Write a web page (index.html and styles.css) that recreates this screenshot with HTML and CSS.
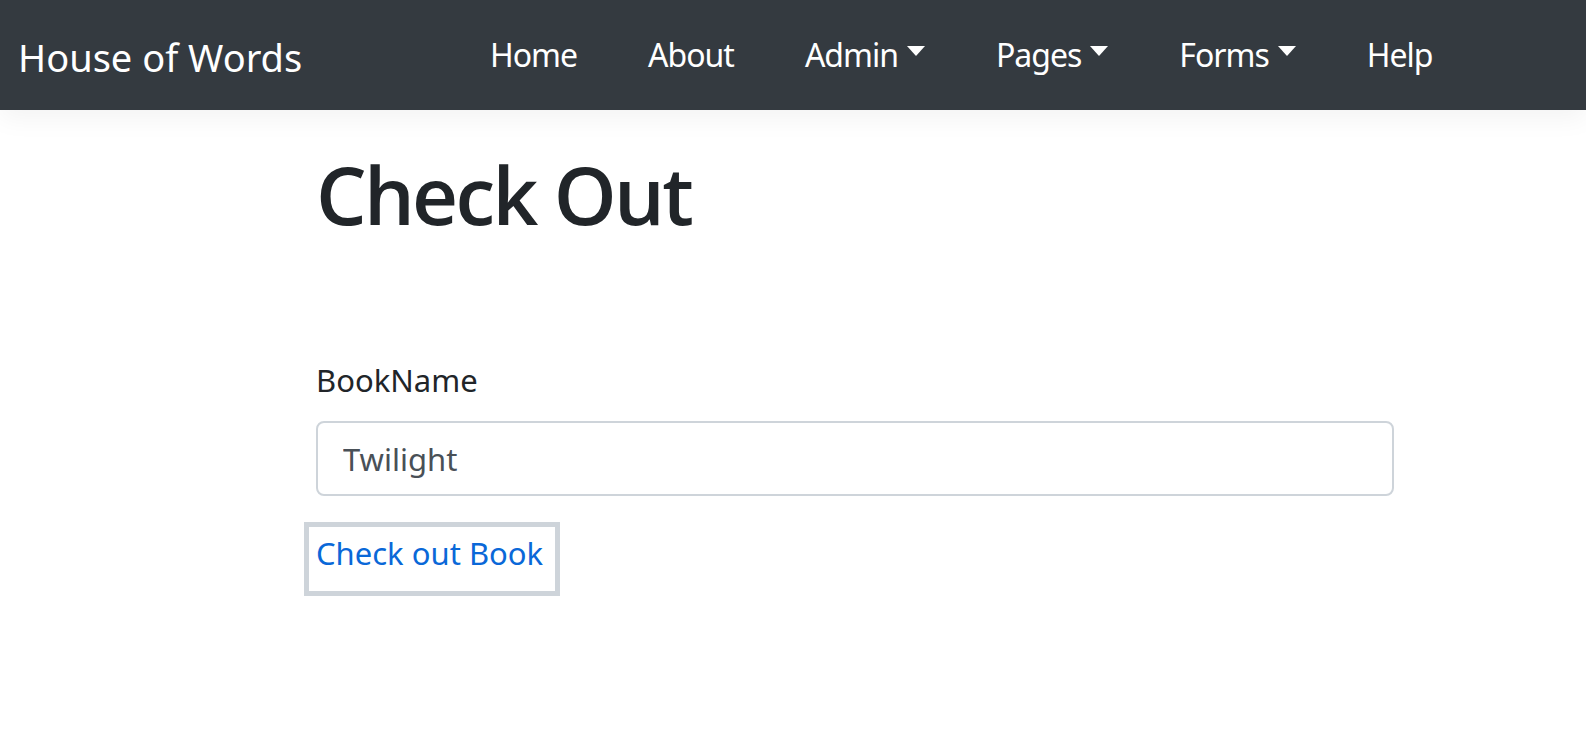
FILE: index.html
```html
<!DOCTYPE html>
<html lang="en">
<head>
<meta charset="utf-8">
<title>Check Out - House of Words</title>
<link rel="stylesheet" href="styles.css">
</head>
<body>
<header class="navbar">
  <a class="brand" href="#">House of Words</a>
  <ul class="nav">
    <li><a class="nav-link" href="#">Home</a></li>
    <li><a class="nav-link" href="#">About</a></li>
    <li><a class="nav-link dropdown" href="#">Admin</a></li>
    <li><a class="nav-link dropdown" href="#">Pages</a></li>
    <li><a class="nav-link dropdown" href="#">Forms</a></li>
    <li><a class="nav-link" href="#">Help</a></li>
  </ul>
</header>
<main class="content">
  <h1 class="title">Check Out</h1>
  <form class="form">
    <label class="label" for="book">BookName</label>
    <input class="input" id="book" type="text" value="Twilight">
    <button class="btn" type="button">Check out Book</button>
  </form>
</main>
</body>
</html>
```
FILE: styles.css
```css
* { box-sizing: border-box; }
html, body { margin: 0; padding: 0; }
body {
  font-family: "Noto Sans", "Open Sans", sans-serif;
  color: #212529;
  background: #fff;
}
.navbar {
  height: 110px;
  background: #343a40;
  display: flex;
  align-items: center;
  box-shadow: 0 8px 25px rgba(0, 0, 0, 0.05);
  position: relative;
}
.brand {
  width: 490px;
  padding-left: 18px;
  color: #fff;
  font-size: 38px;
  text-decoration: none;
  line-height: 1;
  margin-top: 3px;
}
.nav {
  list-style: none;
  margin: 0;
  padding: 0;
  display: flex;
  gap: 71px;
}
.nav-link {
  color: #fff;
  text-decoration: none;
  font-size: 32px;
  letter-spacing: -1px;
  line-height: 1;
  display: inline-flex;
  align-items: center;
}
.dropdown::after {
  content: "";
  display: inline-block;
  margin-left: 9px;
  margin-top: -8px;
  border-top: 10px solid #fff;
  border-left: 9.5px solid transparent;
  border-right: 9.5px solid transparent;
}
.content {
  padding-left: 316px;
  width: 1394px;
}
.title {
  margin: 35px 0 0 0;
  font-family: "Open Sans", "Noto Sans", sans-serif;
  font-size: 80px;
  font-weight: 600;
  letter-spacing: -2.7px;
  line-height: 97px;
  color: #212529;
}
.form {
  display: flex;
  flex-direction: column;
  align-items: flex-start;
  margin-top: 113px;
}
.label {
  font-size: 31px;
  line-height: 50px;
  color: #212529;
}
.input {
  margin-top: 16px;
  width: 100%;
  height: 75px;
  border: 2px solid #ced4da;
  border-radius: 8px;
  padding: 0 25px;
  font-family: inherit;
  font-size: 31px;
  color: #495057;
  background: #fff;
}
.btn {
  margin-top: 26px;
  margin-left: -12px;
  height: 74px;
  border: 5px solid #ced4da;
  background: #fff;
  color: #0a68d8;
  font-family: inherit;
  font-size: 31px;
  padding: 0 12px 12px 7px;
  line-height: 1;
}
```
